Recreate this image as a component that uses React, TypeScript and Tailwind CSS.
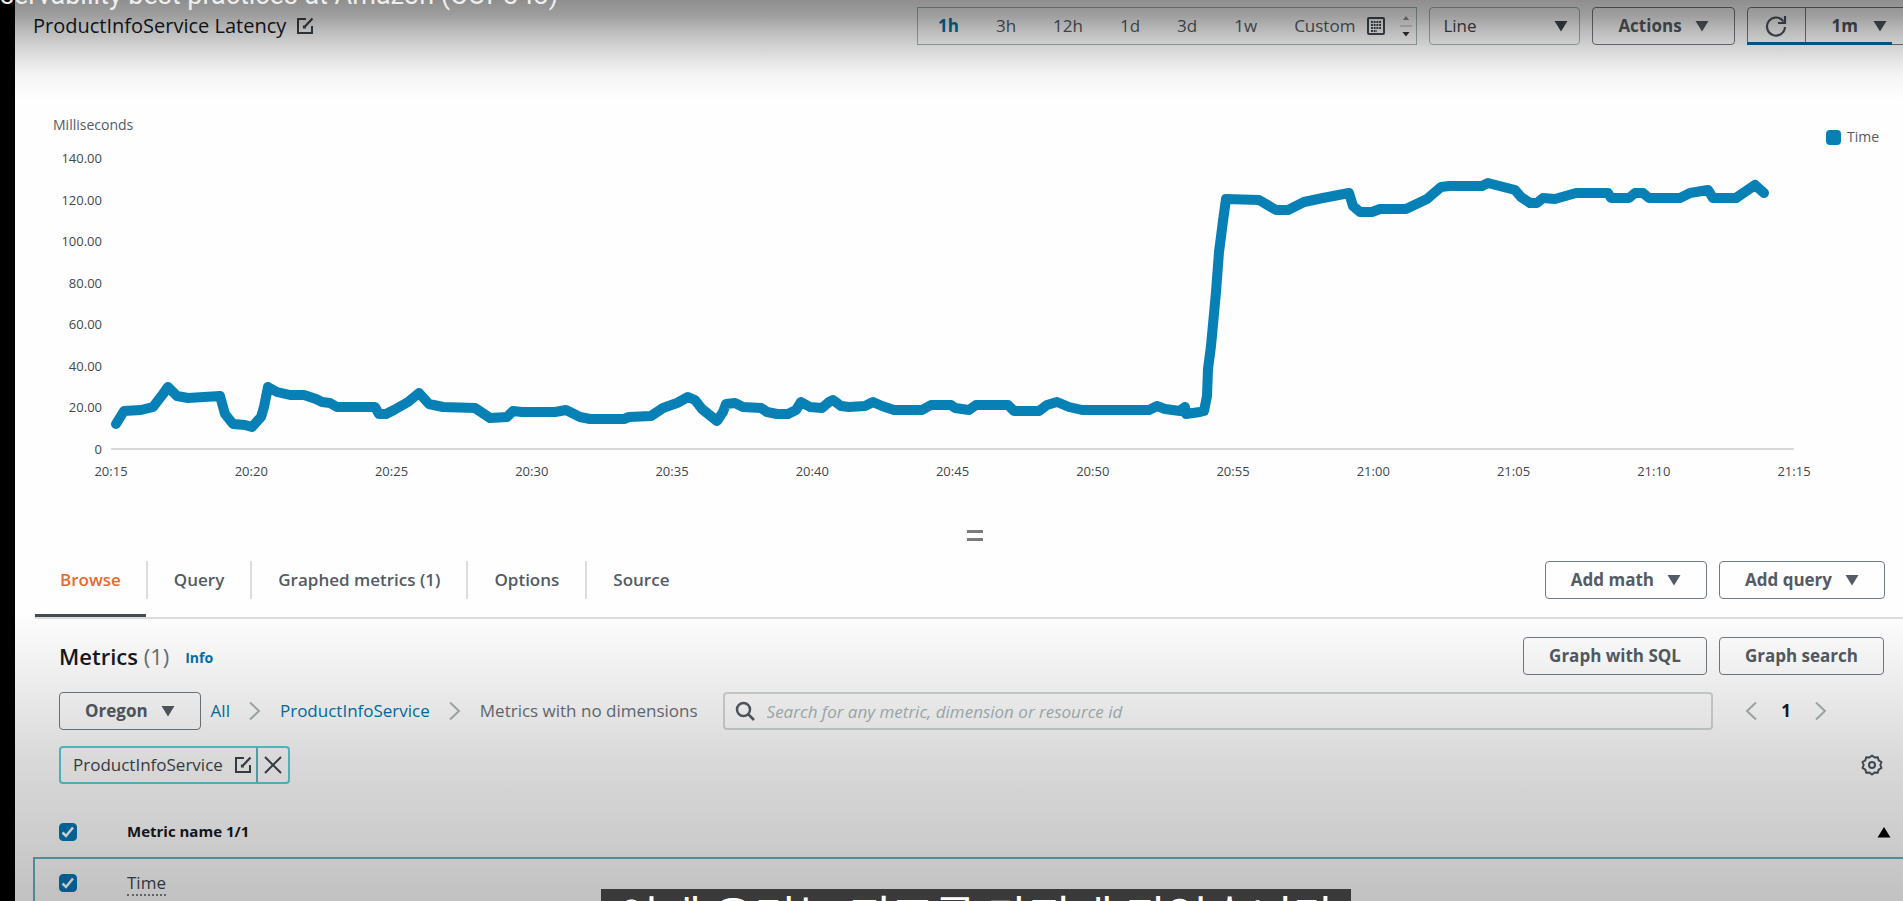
import type { ReactNode } from 'react';

const ranges = ['1h', '3h', '12h', '1d', '3d', '1w'];
const tabs = ['Browse', 'Query', 'Graphed metrics (1)', 'Options', 'Source'];

const yTicks = ['140.00', '120.00', '100.00', '80.00', '60.00', '40.00', '20.00', '0'];
const xTicks = [
  '20:15', '20:20', '20:25', '20:30', '20:35', '20:40', '20:45',
  '20:50', '20:55', '21:00', '21:05', '21:10', '21:15',
];

// Latency series in plot units, see the viewBox in LatencyChart
const series =
  '116,425 124,412 141,411 153,408 163,395 168,388 177,397 188,399 204,398 220,397 225,415 233,425 245,426 252,428 ' +
  '261,418 264,408 268,388 277,393 290,396 304,396 316,400 322,403 330,404 337,408 375,408 379,415 386,415 394,411 ' +
  '408,403 419,394 429,405 443,408 475,409 490,419 507,418 513,412 522,413 555,413 566,411 580,418 590,420 624,420 ' +
  '629,418 651,417 663,409 677,404 688,398 695,401 702,410 717,422 723,413 726,405 735,404 743,408 761,409 767,413 ' +
  '777,415 788,415 796,411 801,403 810,408 822,409 829,403 833,401 841,407 849,408 865,407 873,403 882,407 894,411 ' +
  '922,411 931,406 951,406 955,409 969,411 976,406 1008,406 1014,412 1039,412 1047,406 1057,403 1069,408 1082,411 ' +
  '1149,411 1157,407 1165,410 1180,412 1185,408 1186,415 1200,413 1204,412 1207,397 1208,370 1211,347 1216,293 ' +
  '1219,253 1223,222 1226,200 1259,201 1276,211 1288,211 1304,203 1323,199 1349,194 1353,207 1360,213 1372,213 ' +
  '1380,210 1406,210 1427,200 1441,188 1449,187 1482,187 1488,184 1515,191 1521,198 1530,204 1537,204 1543,199 ' +
  '1555,200 1576,194 1608,194 1611,199 1629,199 1635,194 1643,194 1649,199 1680,199 1690,194 1708,191 1713,199 ' +
  '1736,199 1755,186 1764,194';

const Caret = () => (
  <svg className="h-3 w-3.5 shrink-0" viewBox="0 0 14 12" fill="currentColor" aria-hidden="true">
    <path d="M.5 1h13L7 11.5z" />
  </svg>
);

const EditIcon = () => (
  <svg className="h-[18px] w-[18px] shrink-0" viewBox="0 0 18 18" fill="none" stroke="currentColor" strokeWidth="2" aria-hidden="true">
    <path d="M10 2H2v14h14V9" />
    <path d="M16.500 1.500 8 10.500" strokeWidth="2.200" />
    <path d="M7.500 8.500v2.500H10" strokeWidth="1.200" />
  </svg>
);

const Chevron = ({ left = false }: { left?: boolean }) => (
  <svg className="h-5 w-3 shrink-0" viewBox="0 0 12 20" fill="none" stroke="#a9b3b3" strokeWidth="2" aria-hidden="true">
    <path d={left ? 'M11 1.500 2 10l9 8.500' : 'M1 1.500 10 10l-9 8.500'} />
  </svg>
);

const Button = ({ children, caret = false }: { children: ReactNode; caret?: boolean }) => (
  <button className="flex h-[38px] items-center gap-[13px] whitespace-nowrap rounded-sm border border-[#737b82] px-[25px] text-[17px] font-bold text-[#545b64]">
    {children}
    {caret && <Caret />}
  </button>
);

const CheckBox = ({ label }: { label: string }) => (
  <label className="relative block h-[18px] w-[18px]">
    <input
      type="checkbox"
      defaultChecked
      aria-label={label}
      className="peer block h-[18px] w-[18px] appearance-none rounded-sm border border-[#0079b5] checked:bg-[#0079b5]"
    />
    <svg
      className="pointer-events-none absolute inset-0 hidden h-[18px] w-[18px] peer-checked:block"
      viewBox="0 0 18 18"
      fill="none"
      stroke="#fff"
      strokeWidth="2.500"
      aria-hidden="true"
    >
      <path d="m3.500 9.500 3.500 3.500 7-8.500" />
    </svg>
  </label>
);

const Toolbar = () => (
  <header className="flex h-[38px] items-stretch pl-[18px] text-[17px]">
    <h1 className="flex items-center gap-2.5 whitespace-nowrap text-[20px] text-[#16191f]">
      ProductInfoService Latency
      <button aria-label="Edit title" className="text-[#3b4248]">
        <EditIcon />
      </button>
    </h1>

    <div className="ml-auto flex items-center gap-[37px] border border-[#a3b5b5] pl-5 pr-[3px] text-[#545b64]">
      {ranges.map((range, i) => (
        <button key={range} className={i === 0 ? 'font-bold text-[#0073a8]' : ''}>
          {range}
        </button>
      ))}
      <div className="flex items-center gap-[14px]">
        <button className="flex items-center gap-3">
          Custom
          <svg className="h-[18px] w-[18px]" viewBox="0 0 18 18" fill="none" stroke="#414950" aria-hidden="true">
            <rect x="1" y="1" width="16" height="16" rx="1" strokeWidth="2" />
            <path d="M4 5h10M4 8h10M4 11h10M4 14h6" strokeWidth="1.800" strokeDasharray="1.900 .8" />
          </svg>
        </button>
        <svg className="h-7 w-3.5" viewBox="0 0 14 28" aria-hidden="true">
          <path d="m4 8 3-4 3 4z" fill="#879096" />
          <path d="M1 14h12" stroke="#b4b4b4" />
          <path d="M3.500 20h7L7 24.500z" fill="#333" />
        </svg>
      </div>
    </div>

    <div className="relative ml-3 w-[151px] text-[#3d454d]">
      <select
        aria-label="Graph type"
        className="h-full w-full appearance-none rounded-sm border border-[#a3b5b5] px-[13px] font-medium"
      >
        <option>Line</option>
      </select>
      <span className="pointer-events-none absolute right-3 top-[13px]">
        <Caret />
      </span>
    </div>

    <div className="ml-3">
      <Button caret>Actions</Button>
    </div>

    <div className="relative -mr-2 ml-3 flex rounded-sm border border-[#737b82] text-[#4a535c]">
      <button aria-label="Refresh" className="flex w-[58px] items-center justify-center border-r border-[#737b82]">
        <svg className="h-[22px] w-[22px]" viewBox="0 0 22 22" fill="none" stroke="currentColor" strokeWidth="2.200" aria-hidden="true">
          <path d="M18.500 6.500A9 9 0 1 0 20 12" />
          <path d="M20 1v7h-7" />
        </svg>
      </button>
      <button className="flex items-center gap-[15px] pl-[26px] pr-[23px] font-bold">
        1m
        <Caret />
      </button>
      <span className="absolute -bottom-px -left-px right-[18px] h-[3px] bg-[#00689c]" />
    </div>
  </header>
);

const LatencyChart = () => (
  <section className="pl-[38px] pt-[70px]" aria-label="ProductInfoService Latency graph">
    <div className="flex">
      <div className="min-w-0 flex-1">
        <p className="text-sm leading-5 text-[#545b64]">Milliseconds</p>
        <div className="flex pt-[23px]">
          <div className="-my-2 flex w-[49px] flex-col justify-between text-right text-[13px] leading-4 text-[#3f474e]">
            {yTicks.map((tick) => (
              <span key={tick}>{tick}</span>
            ))}
          </div>
          <svg
            className="ml-[9px] h-[291px] min-w-0 flex-1 overflow-visible"
            viewBox="111 159 1683 291"
            preserveAspectRatio="none"
            fill="none"
            aria-hidden="true"
          >
            <path d="M111 450h1683" stroke="#d9d9d9" strokeWidth="2" vectorEffect="non-scaling-stroke" />
            <polyline
              points={series}
              stroke="#0680b5"
              strokeWidth="10"
              strokeLinecap="round"
              strokeLinejoin="round"
              vectorEffect="non-scaling-stroke"
            />
          </svg>
        </div>
        <div className="-mr-5 ml-[38px] flex justify-between pt-3 text-[13px] leading-5 text-[#3f474e]">
          {xTicks.map((tick) => (
            <span key={tick} className="w-10 text-center">{tick}</span>
          ))}
        </div>
      </div>
      <div className="flex w-[109px] items-start gap-1.5 pl-8 pt-3">
        <span className="mt-[3px] h-[15px] w-[15px] rounded-sm bg-[#0680b5]" />
        <span className="text-sm leading-5 text-[#545b64]">Time</span>
      </div>
    </div>
  </section>
);

const TabBar = () => (
  <nav className="ml-5 flex h-[58px] items-start border-b-2 border-[#dcdede] pr-[18px] text-[17px]">
    {tabs.map((tab, i) => (
      <div key={tab} className="flex h-full items-start">
        {i > 0 && <span className="h-[38px] w-0.5 bg-[#dcdede]" />}
        <button
          className={
            i === 0
              ? 'h-14 border-b-[3px] border-[#454b50] px-[25px] pb-[15px] font-semibold text-[#e8692e]'
              : 'h-[38px] px-[26px] font-semibold text-[#545b64]'
          }
        >
          {tab}
        </button>
      </div>
    ))}
    <div className="ml-auto flex gap-3">
      <Button caret>Add math</Button>
      <Button caret>Add query</Button>
    </div>
  </nav>
);

const Metrics = () => (
  <section>
    <div className="flex items-center pl-11 pr-[19px] pt-[18px]">
      <h2 className="text-[22px] font-semibold text-[#16191f]">
        Metrics <span className="font-normal text-[#687078]">(1)</span>
      </h2>
      <a href="#info" className="ml-4 pt-1 text-sm font-bold text-[#0073b0]">Info</a>
      <div className="ml-auto flex gap-3">
        <Button>Graph with SQL</Button>
        <Button>Graph search</Button>
      </div>
    </div>

    <div className="flex items-center pl-11 pt-[17px] text-[17px]">
      <Button caret>Oregon</Button>
      <div className="ml-[10px] flex items-center gap-[19px] whitespace-nowrap">
        <a href="#all" className="text-[#0073b0]">All</a>
        <Chevron />
        <a href="#product-info-service" className="text-[#0073b0]">ProductInfoService</a>
        <Chevron />
        <span className="text-[#687078]">Metrics with no dimensions</span>
      </div>
      <div className="relative ml-[25px] flex-1">
        <svg
          className="absolute left-3 top-[9px] h-5 w-5"
          viewBox="0 0 20 20"
          fill="none"
          stroke="#545b64"
          strokeWidth="2.500"
          aria-hidden="true"
        >
          <circle cx="8.500" cy="8.500" r="6.500" />
          <path d="m13 13 6 6" />
        </svg>
        <input
          type="search"
          aria-label="Search metrics"
          placeholder="Search for any metric, dimension or resource id"
          className="h-[38px] w-full rounded-sm border-2 border-[#d2d6d6] pl-[42px] placeholder:italic placeholder:text-[#a9b6b9]"
        />
      </div>
      <div className="ml-8 mr-[76px] flex items-center gap-6">
        <button aria-label="Previous page"><Chevron left /></button>
        <span className="font-bold text-[#16191f]">1</span>
        <button aria-label="Next page"><Chevron /></button>
      </div>
    </div>

    <div className="flex items-center justify-between pl-11 pr-5 pt-4">
      <div className="flex h-[38px] rounded-sm border-2 border-[#5fccd8] text-[17px] text-[#3d454d]">
        <button className="flex items-center gap-[11px] border-r-2 border-[#5fb4c0] pl-3 pr-1">
          ProductInfoService
          <EditIcon />
        </button>
        <button aria-label="Remove filter" className="px-[6px]">
          <svg className="h-[18px] w-[18px]" viewBox="0 0 18 18" stroke="currentColor" strokeWidth="2" aria-hidden="true">
            <path d="m1 1 16 16M17 1 1 17" />
          </svg>
        </button>
      </div>
      <button aria-label="Preferences" className="text-[#4a535c]">
        <svg className="h-[22px] w-[22px]" viewBox="0 0 22 22" fill="none" stroke="currentColor" strokeWidth="2" aria-hidden="true">
          <path
            d="m11 1.500 2.600 2 3.200-.3.800 3.100 2.900 1.700-1.200 3 1.200 3-2.900 1.700-.8 3.100-3.200-.3-2.600 2-2.600-2-3.200.3-.8-3.100L1.500 14l1.200-3-1.200-3 2.900-1.700.8-3.100 3.200.3z"
            strokeLinejoin="round"
          />
          <circle cx="11" cy="11" r="3" />
        </svg>
      </button>
    </div>

    <table className="ml-[18px] mt-[22px] w-full border-collapse text-left">
      <thead>
        <tr className="h-[52px]">
          <th className="w-[93px] pl-[25px]"><CheckBox label="Select all metrics" /></th>
          <th className="text-[15px] font-bold text-[#16191f]">Metric name 1/1</th>
          <th className="pr-[29px]">
            <svg className="ml-auto h-3 w-3.5" viewBox="0 0 14 12" aria-label="Sorted ascending">
              <path d="M.5 11.500h13L7 1z" />
            </svg>
          </th>
        </tr>
      </thead>
      <tbody>
        <tr className="h-[50px] border-2 border-[#5fb4c0]">
          <td className="pl-6"><CheckBox label="Select Time" /></td>
          <td className="text-[17px] text-[#3d454d]">
            <span className="border-b-2 border-dotted border-[#7d8388]">Time</span>
          </td>
          <td />
        </tr>
      </tbody>
    </table>
  </section>
);

const App = () => {
  return (
    <div className="relative h-screen overflow-hidden bg-black pl-[15px] font-['Open_Sans','Noto_Sans',sans-serif]">
      <main className="h-full overflow-hidden bg-[#fefefe] pt-[7px]">
        <Toolbar />
        <LatencyChart />
        <div className="flex h-20 items-end justify-center pb-5 pl-8">
          <span className="h-[11px] w-4 border-y-[3px] border-[#7a7a7a]" />
        </div>
        <TabBar />
        <Metrics />
      </main>

      {/* Player shading over the top and bottom of the frame */}
      <div className="pointer-events-none absolute inset-x-0 top-0 h-[100px] bg-[linear-gradient(to_bottom,rgba(0,0,0,0.44)_0%,rgba(0,0,0,0.38)_15%,rgba(0,0,0,0.27)_30%,rgba(0,0,0,0.18)_45%,rgba(0,0,0,0.1)_60%,rgba(0,0,0,0.04)_75%,rgba(0,0,0,0)_100%)]" />
      <div className="pointer-events-none absolute inset-x-0 bottom-0 h-[290px] bg-[linear-gradient(to_bottom,rgba(0,0,0,0)_0%,rgba(0,0,0,0.04)_14%,rgba(0,0,0,0.09)_32%,rgba(0,0,0,0.15)_52%,rgba(0,0,0,0.19)_75%,rgba(0,0,0,0.24)_100%)]" />

      <p className="absolute left-0 top-[-19px] whitespace-nowrap font-[Roboto,sans-serif] text-[27px] leading-7 text-[#eee]">
        servability best practices at Amazon (COP343)
      </p>
      <p className="absolute left-[601px] top-[889px] whitespace-nowrap bg-[#3a3a3a] px-4 font-['Noto_Sans_CJK_KR',sans-serif] text-[46px] leading-[50px] text-white">
        이제 우리는 지표를 가지게 되었습니다
      </p>
    </div>
  );
};

export default App;
